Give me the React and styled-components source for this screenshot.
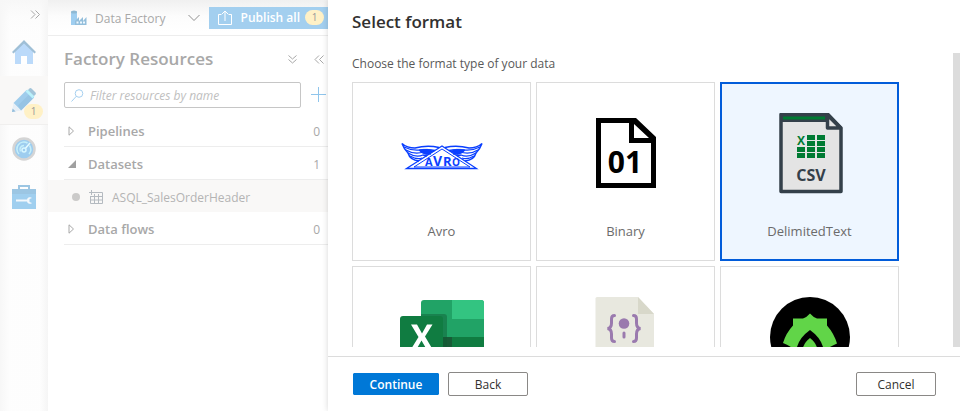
import React, { useState } from "react";
import styled, { createGlobalStyle, css } from "styled-components";

const GlobalStyle = createGlobalStyle`
  *, *::before, *::after { box-sizing: border-box; }
  body { margin: 0; background: #fff; }
  body, button, input { font-family: "Open Sans", "Noto Sans", sans-serif; }
  button { cursor: pointer; }
  h1, h2, p, ul { margin: 0; padding: 0; }
`;

const Page = styled.div`
  display: flex;
  height: 100vh;
  overflow: hidden;
`;

/* ---------- workspace behind the flyout ---------- */

const Workspace = styled.div`
  display: flex;
  flex: 0 0 328px;
  min-width: 0;
  overflow: hidden;
  color: #a8a8a8;
  background: linear-gradient(#f0f0f0, #fcfcfc 16px, #fff 32px);
`;

const Rail = styled.nav`
  display: flex;
  flex: 0 0 48px;
  flex-direction: column;
  background: linear-gradient(90deg, #f7f7f7, rgba(252, 252, 252, 0.6) 10px, rgba(252, 252, 252, 0.6) 40px, #f5f5f5);
`;

const IconButton = styled.button`
  display: flex;
  align-items: center;
  justify-content: center;
  padding: 0;
  border: 0;
  background: none;
  color: #a8a8a8;
`;

const RailToggle = styled(IconButton)`
  height: 28px;
  padding-left: 22px;
`;

const RailButton = styled(IconButton)`
  position: relative;
  height: 48px;
  ${(p) =>
    p.$active &&
    css`
      height: 49px;
      border-bottom: 1px solid #f0efee;
      background: #f9f8f7;
    `}
`;

const Badge = styled.span`
  min-width: 19px;
  height: 15px;
  border-radius: 8px;
  background: #fff1c6;
  color: #999;
  font-size: 10px;
  font-weight: 400;
  line-height: 15px;
  text-align: center;
`;

const RailBadge = styled(Badge)`
  position: absolute;
  right: 5px;
  bottom: 5px;
`;

const Explorer = styled.main`
  flex: 1;
  min-width: 0;
`;

const TopBar = styled.div`
  display: flex;
  align-items: center;
  height: 36px;
  padding-left: 22px;
  border-bottom: 1px solid #ededed;
  white-space: nowrap;
`;

const FactoryName = styled.span`
  flex: 1;
  margin-left: 8px;
  padding-top: 1px;
  font-size: 12px;
`;

const PublishButton = styled.button`
  display: flex;
  flex: none;
  align-items: center;
  gap: 9px;
  height: 22px;
  margin-left: 9px;
  padding: 0 4px 0 9px;
  border: 0;
  background: #a3cfef;
  color: #fff;
  font-size: 12px;
  font-weight: 600;
`;

const PublishLabel = styled.span`
  display: flex;
  align-items: center;
  gap: 5px;
`;

const ExplorerHeader = styled.div`
  display: flex;
  align-items: center;
  gap: 16px;
  height: 46px;
  padding: 0 3px 0 16px;
`;

const ExplorerTitle = styled.h1`
  flex: 1;
  font-size: 17px;
  font-weight: 600;
  line-height: 24px;
`;

const FilterRow = styled.div`
  display: flex;
  align-items: center;
  gap: 10px;
  padding: 0 1px 6px 16px;
`;

const FilterBox = styled.label`
  display: flex;
  flex: 1;
  align-items: center;
  gap: 6px;
  min-width: 0;
  height: 26px;
  padding: 0 6px;
  border: 1px solid #c6c6c6;
  border-radius: 2px;
  background: #fff;
`;

const FilterInput = styled.input`
  flex: 1;
  min-width: 0;
  padding: 0;
  border: 0;
  outline: 0;
  background: none;
  color: #a8a8a8;
  font-size: 12px;
  &::placeholder { color: #c0c0c0; font-style: italic; opacity: 1; }
`;

const Tree = styled.ul`
  list-style: none;
`;

const Group = styled.li`
  display: flex;
  align-items: center;
  height: 33px;
  margin-left: 16px;
  padding: 2px 8px 0 4px;
  border-bottom: 1px solid #ededed;
  font-size: 13px;
  font-weight: 600;
`;

const GroupName = styled.span`
  flex: 1;
  margin-left: 12px;
`;

const GroupCount = styled.span`
  font-size: 12px;
  font-weight: 400;
`;

const Item = styled.li`
  display: flex;
  align-items: center;
  height: 32px;
  padding: 2px 0 0 24px;
  background: #f9f8f7;
  color: #b4b4b4;
  font-size: 12px;
`;

const Dot = styled.span`
  width: 8px;
  height: 8px;
  margin-right: 9px;
  border-radius: 50%;
  background: #cbcac9;
`;

const ItemName = styled.span`
  margin-left: 8px;
`;

/* ---------- flyout ---------- */

const Flyout = styled.section`
  z-index: 1;
  display: flex;
  flex: 1;
  flex-direction: column;
  min-width: 0;
  background: #fff;
  box-shadow: 0 0 6px rgba(0, 0, 0, 0.16);
`;

const FlyoutTitle = styled.h2`
  padding: 10px 24px 19px;
  color: #323130;
  font-size: 17px;
  font-weight: 600;
  line-height: 24px;
`;

const ScrollFrame = styled.div`
  display: flex;
  flex: 1;
  min-height: 0;
  margin-bottom: 9px;
`;

const ScrollArea = styled.div`
  flex: 1;
  overflow-y: auto;
  padding-left: 24px;
  scrollbar-width: none;
`;

const ScrollThumb = styled.div`
  flex: 0 0 7px;
  background: #dcdcdc;
`;

const Prompt = styled.p`
  padding: 1px 0 8px;
  color: #595959;
  font-size: 12px;
  line-height: 20px;
`;

const FormatGrid = styled.div`
  display: grid;
  grid-template-columns: repeat(auto-fill, 179px);
  gap: 5px;
`;

const FormatCard = styled.button`
  display: flex;
  flex-direction: column;
  align-items: center;
  gap: 23px;
  height: 179px;
  padding: 31px 0 0;
  border: 0;
  background: #fff;
  box-shadow: inset 0 0 0 1px #dcdcdc;
  color: #6b6b6b;
  font-size: 13px;
  line-height: 22px;
  ${(p) =>
    p.$selected &&
    css`
      background: #eef6ff;
      box-shadow: inset 0 0 0 2px #015cda;
    `}
`;

const Footer = styled.footer`
  display: flex;
  gap: 8px;
  padding: 15px 24px;
  border-top: 1px solid #dcdcdc;
`;

const ActionButton = styled.button`
  min-width: 80px;
  height: 24px;
  padding: 0 12px;
  border: 1px solid #8a8886;
  border-radius: 2px;
  background: #fff;
  color: #323130;
  font-size: 12px;
  ${(p) =>
    p.$primary &&
    css`
      min-width: 88px;
      border-color: #fff;
      background: #0078d7;
      background-clip: padding-box;
      color: #fff;
      font-weight: 600;
    `}
  ${(p) => p.$end && css`margin-left: auto;`}
`;

/* ---------- small icons ---------- */

const DoubleChevron = ({ d }) => (
  <svg width="11" height="11" viewBox="0 0 11 11" fill="none" stroke="currentColor" aria-hidden="true">
    <path d={d} />
  </svg>
);
const CHEVRONS = {
  right: "M1 1.5l4 4-4 4M5.5 1.5l4 4-4 4",
  left: "M5 1.5l-4 4 4 4M9.5 1.5l-4 4 4 4",
  down: "M1.5 1.5l4 3.5 4-3.5M1.5 5.5l4 3.5 4-3.5",
};

const HomeIcon = () => (
  <svg width="24" height="24" viewBox="0 0 24 24" aria-hidden="true">
    <path d="M3 11l9-9 9 9v13H3z" fill="#bbdafa" />
    <path d="M0 12L12 0l12 12-1.5 1.5L12 3.500 1.5 13.500z" fill="#9fbfd6" />
    <path d="M9 16h6v8H9z" fill="#fff" />
  </svg>
);

const PencilIcon = () => (
  <svg width="24" height="24" viewBox="0 0 24 24" aria-hidden="true">
    <path d="M1.5 15L14.500 2l7.500 7.500L9 22.500z" fill="#9fccec" />
    <path d="M6 17.500L18.500 5l3.500 4.500L9 22.500z" fill="#96c4e4" />
    <path d="M15.500 2.500l2-2q1-1 2.500.5l3 3q1.500 1.500.5 2.500l-2 2z" fill="#a2c4d9" />
    <path d="M13.500 3.500l2-2 7 7-2 2z" fill="#b9f1fb" />
    <path d="M1.500 15L9 22.500 0 24z" fill="#e6eff7" />
    <path d="M.6 20.500l3 3L0 24z" fill="#93bddb" />
  </svg>
);

const GaugeIcon = () => (
  <svg width="24" height="24" viewBox="0 0 24 24" fill="none" aria-hidden="true">
    <circle cx="12" cy="12" r="10.500" fill="#9ecdef" stroke="#d5d5d5" strokeWidth="2.500" />
    <path d="M7 17a7 7 0 0 1 8.500-11M17.500 8.500A7 7 0 0 1 17 17M8.500 14.500a4 4 0 0 1 3.500-6" stroke="#c5effa" strokeWidth="1.500" />
    <path d="M12 13L18 6" stroke="#e5faff" strokeWidth="1.500" />
    <circle cx="12" cy="13" r="2" fill="#9ecdef" stroke="#d9f7ff" strokeWidth="1.500" />
  </svg>
);

const ToolboxIcon = () => (
  <svg width="24" height="24" viewBox="0 0 24 24" aria-hidden="true">
    <path d="M7 5V1h10v4" fill="none" stroke="#9cc6e3" strokeWidth="2" />
    <path d="M0 4h24v20H0z" fill="#a0cfef" />
    <path d="M0 4h24v5H0z" fill="#9cc6e3" />
    <path d="M4 14.500h11a3 3 0 0 1 5-1.500l-2.500 1v3l2.500 1a3 3 0 0 1-5-1.500H4z" fill="#f3f8fc" />
  </svg>
);

const FactoryIcon = () => (
  <svg width="17" height="16" viewBox="0 0 17 16" aria-hidden="true">
    <path d="M1 2h6v13H1z" fill="#9fcef0" />
    <ellipse cx="4" cy="2" rx="3" ry="1.500" fill="#8fb9d3" />
    <path d="M5 11l4-4v4l4-4v4l3.500-4v8H5z" fill="#93bedb" />
    <path d="M6.500 11.500h2v2h-2zM10 11.500h2v2h-2zM13 11.500h2v2h-2z" fill="#eef8ff" />
  </svg>
);

const ChevronDown = () => (
  <svg width="12" height="8" viewBox="0 0 12 8" fill="none" stroke="#8f8f8f" aria-hidden="true">
    <path d="M.5 1l5.500 5.500L11.500 1" />
  </svg>
);

const UploadIcon = () => (
  <svg width="14" height="15" viewBox="0 0 14 15" fill="none" stroke="#fff" aria-hidden="true">
    <path d="M3.500 4.500h-3v10h13v-10h-3M7 11V1M4 4l3-3 3 3" />
  </svg>
);

const SearchIcon = () => (
  <svg width="13" height="13" viewBox="0 0 13 13" fill="none" stroke="#a6d0f0" aria-hidden="true">
    <circle cx="8" cy="4.500" r="3.800" />
    <path d="M5.300 7.300L.5 12.500" />
  </svg>
);

const PlusIcon = () => (
  <svg width="16" height="16" viewBox="0 0 16 16" stroke="#8fc5ec" aria-hidden="true">
    <path d="M0 7.500h15M7.500 0v15" />
  </svg>
);

const Caret = ({ open }) => (
  <svg width="8" height="10" viewBox="0 0 8 10" aria-hidden="true">
    {open ? <path d="M8 1v8H0z" fill="#a0a0a0" /> : <path d="M1 .8v8.400L5.500 5z" fill="none" stroke="#a8a8a8" />}
  </svg>
);

const TableIcon = () => (
  <svg width="15" height="14" viewBox="0 0 15 14" fill="none" stroke="#b4bac0" aria-hidden="true">
    <path d="M5 2.500h8.500v11H1.500V6M1.500 6.500h12M1.500 10h12M5.500 4v9.500M9.500 4v9.500M2.500 0v5M0 2.500h5" />
  </svg>
);

/* ---------- format logos ---------- */

const Logo = (props) => <svg width="84" height="84" viewBox="0 0 84 84" aria-hidden="true" {...props} />;

const LogoText = styled.text`
  font-family: "Open Sans", "Noto Sans", sans-serif;
  font-weight: 700;
`;

const AvroLogo = () => (
  <Logo fill="none" stroke="#0a3fff">
    <path d="M6.500 55.500L42 33l34.500 22.500z" strokeWidth="1.300" />
    <path d="M14 54L42 36l28 18z" strokeWidth="1" />
    {[false, true].map((flip) => (
      <g key={String(flip)} transform={flip ? "translate(84) scale(-1 1)" : undefined}>
        <path d="M39 34.500Q27 32 15 35Q7 35 2 30.500Q4 36 8 40Q10 47 19 48" strokeWidth="1.500" />
        <path d="M4 34Q12 38 20 37Q29 36 35 37.500M6 37Q14 42 24 39L31 41M8 40Q16 45 23 42L27 43M10 43Q17 47 22 45" strokeWidth="1.300" />
        <path d="M19 37Q28 35 34 38L27 42Q20 40 19 37" fill="#0a3fff" strokeWidth=".5" />
      </g>
    ))}
    <g fill="#0a3fff" stroke="none">
      <LogoText x="25" y="53" fontSize="11">A</LogoText>
      <LogoText x="33" y="53" fontSize="14">V</LogoText>
      <LogoText x="43" y="53" fontSize="13">R</LogoText>
      <LogoText x="52" y="53" fontSize="10">O</LogoText>
    </g>
  </Logo>
);

const BinaryLogo = () => (
  <Logo>
    <path fillRule="evenodd" d="M12 5h40l20 19v51H12zm5 5v60h50V30H45V10zm33 1v14h15z" fill="#000" />
    <LogoText x="41" y="60" textAnchor="middle" fontSize="30">01</LogoText>
  </Logo>
);

const CsvLogo = () => (
  <Logo>
    <path d="M13 1.500h47l13 13.500V78.500H13z" fill="#e4e4e4" stroke="#34404a" strokeWidth="3.500" strokeLinejoin="round" />
    <path d="M13 2h47v7H13z" fill="#34404a" />
    <path d="M15 3.500h42v3H15z" fill="#007b33" />
    <path d="M59.500 2v13h13z" fill="#e4e4e4" stroke="#34404a" strokeWidth="3.500" strokeLinejoin="round" />
    <g fill="#007b33">
      {[22, 28, 34, 40].map((y, i) =>
        [29, 39, 49].map((x, j) => (i < 2 && j === 0 ? null : <rect key={`${x}-${y}`} x={x} y={y} width="8" height="5" />))
      )}
      <LogoText x="33" y="32" textAnchor="middle" fontSize="12">X</LogoText>
    </g>
    <LogoText x="43" y="68" textAnchor="middle" fontSize="16" fill="#34404a">CSV</LogoText>
  </Logo>
);

const ExcelLogo = () => (
  <Logo>
    <rect x="21" y="3" width="63" height="74" rx="3" fill="#21a366" />
    <path d="M52 3h29a3 3 0 0 1 3 3v16H52z" fill="#33c481" />
    <path d="M21 40h63v18H21z" fill="#107c41" />
    <path d="M21 40h31v20H21z" fill="#185c37" />
    <path d="M21 17h23a3 3 0 0 1 3 3v42H21z" fill="#0f5a34" opacity=".45" />
    <rect y="19" width="43" height="43" rx="3" fill="#107c41" />
    <path d="M11 27.500h6l5 9 5-9h5.500L25 39.500 33 53h-6l-5.500-9.500L16 53h-5.500L18.500 40z" fill="#fff" />
  </Logo>
);

const JsonLogo = () => (
  <Logo>
    <path d="M13 0h41l16 17v63H13q-1.500 0-1.500-1.500V1.500Q11.500 0 13 0z" fill="#e8e8df" />
    <path d="M54 0l16 17H54z" fill="#d8d8ca" />
    <g fill="none" stroke="#9a7aae" strokeWidth="3" strokeLinecap="round">
      <path d="M30.500 18.500q-3 0-3 3.500v4q0 5-4 5.500 4 .5 4 5.500v4q0 3.500 3 3.500M49.500 18.500q3 0 3 3.500v4q0 5 4 5.500-4 .5-4 5.500v4q0 3.500-3 3.500M40 36v4" />
    </g>
    <circle cx="40" cy="26.500" r="5.300" fill="#9a7aae" />
  </Logo>
);

const OrcLogo = () => (
  <Logo>
    <circle cx="42" cy="40" r="40" fill="#000" />
    <path d="M42 16.500q3 3.500 7 5h10v7q7 8 10 18-12 5-22 15H37Q27 51 15 46q3-10 10-17.500v-7h10q4-1.500 7-5z" fill="#61d548" />
    <path d="M42 33q14 10 14 24H28q0-14 14-24z" fill="#000" />
    <path d="M42 41q8 6 8 16H34q0-10 8-16z" fill="#61d548" />
  </Logo>
);

const FORMATS = [
  { id: "Avro", label: "Avro", Icon: AvroLogo },
  { id: "Binary", label: "Binary", Icon: BinaryLogo },
  { id: "DelimitedText", label: "DelimitedText", Icon: CsvLogo },
  { id: "Excel", label: "Excel", Icon: ExcelLogo },
  { id: "Json", label: "Json", Icon: JsonLogo },
  { id: "Orc", label: "Orc", Icon: OrcLogo },
];

export default function App() {
  const [selected, setSelected] = useState("DelimitedText");
  return (
    <Page>
      <GlobalStyle />
      <Workspace>
        <Rail>
          <RailToggle aria-label="Expand menu"><DoubleChevron d={CHEVRONS.right} /></RailToggle>
          <RailButton aria-label="Home"><HomeIcon /></RailButton>
          <RailButton $active aria-label="Author">
            <PencilIcon />
            <RailBadge>1</RailBadge>
          </RailButton>
          <RailButton aria-label="Monitor"><GaugeIcon /></RailButton>
          <RailButton aria-label="Manage"><ToolboxIcon /></RailButton>
        </Rail>
        <Explorer>
          <TopBar>
            <FactoryIcon />
            <FactoryName>Data Factory</FactoryName>
            <IconButton aria-label="Switch factory"><ChevronDown /></IconButton>
            <PublishButton>
              <UploadIcon />
              <PublishLabel>Publish all <Badge>1</Badge></PublishLabel>
            </PublishButton>
          </TopBar>
          <ExplorerHeader>
            <ExplorerTitle>Factory Resources</ExplorerTitle>
            <IconButton aria-label="Expand all"><DoubleChevron d={CHEVRONS.down} /></IconButton>
            <IconButton aria-label="Collapse pane"><DoubleChevron d={CHEVRONS.left} /></IconButton>
          </ExplorerHeader>
          <FilterRow>
            <FilterBox>
              <SearchIcon />
              <FilterInput aria-label="Filter resources by name" placeholder="Filter resources by name" />
            </FilterBox>
            <IconButton aria-label="Add resource"><PlusIcon /></IconButton>
          </FilterRow>
          <Tree>
            <Group><Caret /><GroupName>Pipelines</GroupName><GroupCount>0</GroupCount></Group>
            <Group><Caret open /><GroupName>Datasets</GroupName><GroupCount>1</GroupCount></Group>
            <Item><Dot /><TableIcon /><ItemName>ASQL_SalesOrderHeader</ItemName></Item>
            <Group><Caret /><GroupName>Data flows</GroupName><GroupCount>0</GroupCount></Group>
          </Tree>
        </Explorer>
      </Workspace>
      <Flyout role="dialog" aria-labelledby="flyout-title">
        <FlyoutTitle id="flyout-title">Select format</FlyoutTitle>
        <ScrollFrame>
          <ScrollArea>
            <Prompt>Choose the format type of your data</Prompt>
            <FormatGrid>
              {FORMATS.map(({ id, label, Icon }) => (
                <FormatCard key={id} $selected={id === selected} aria-pressed={id === selected} onClick={() => setSelected(id)}>
                  <Icon />
                  {label}
                </FormatCard>
              ))}
            </FormatGrid>
          </ScrollArea>
          <ScrollThumb />
        </ScrollFrame>
        <Footer>
          <ActionButton $primary>Continue</ActionButton>
          <ActionButton>Back</ActionButton>
          <ActionButton $end>Cancel</ActionButton>
        </Footer>
      </Flyout>
    </Page>
  );
}
